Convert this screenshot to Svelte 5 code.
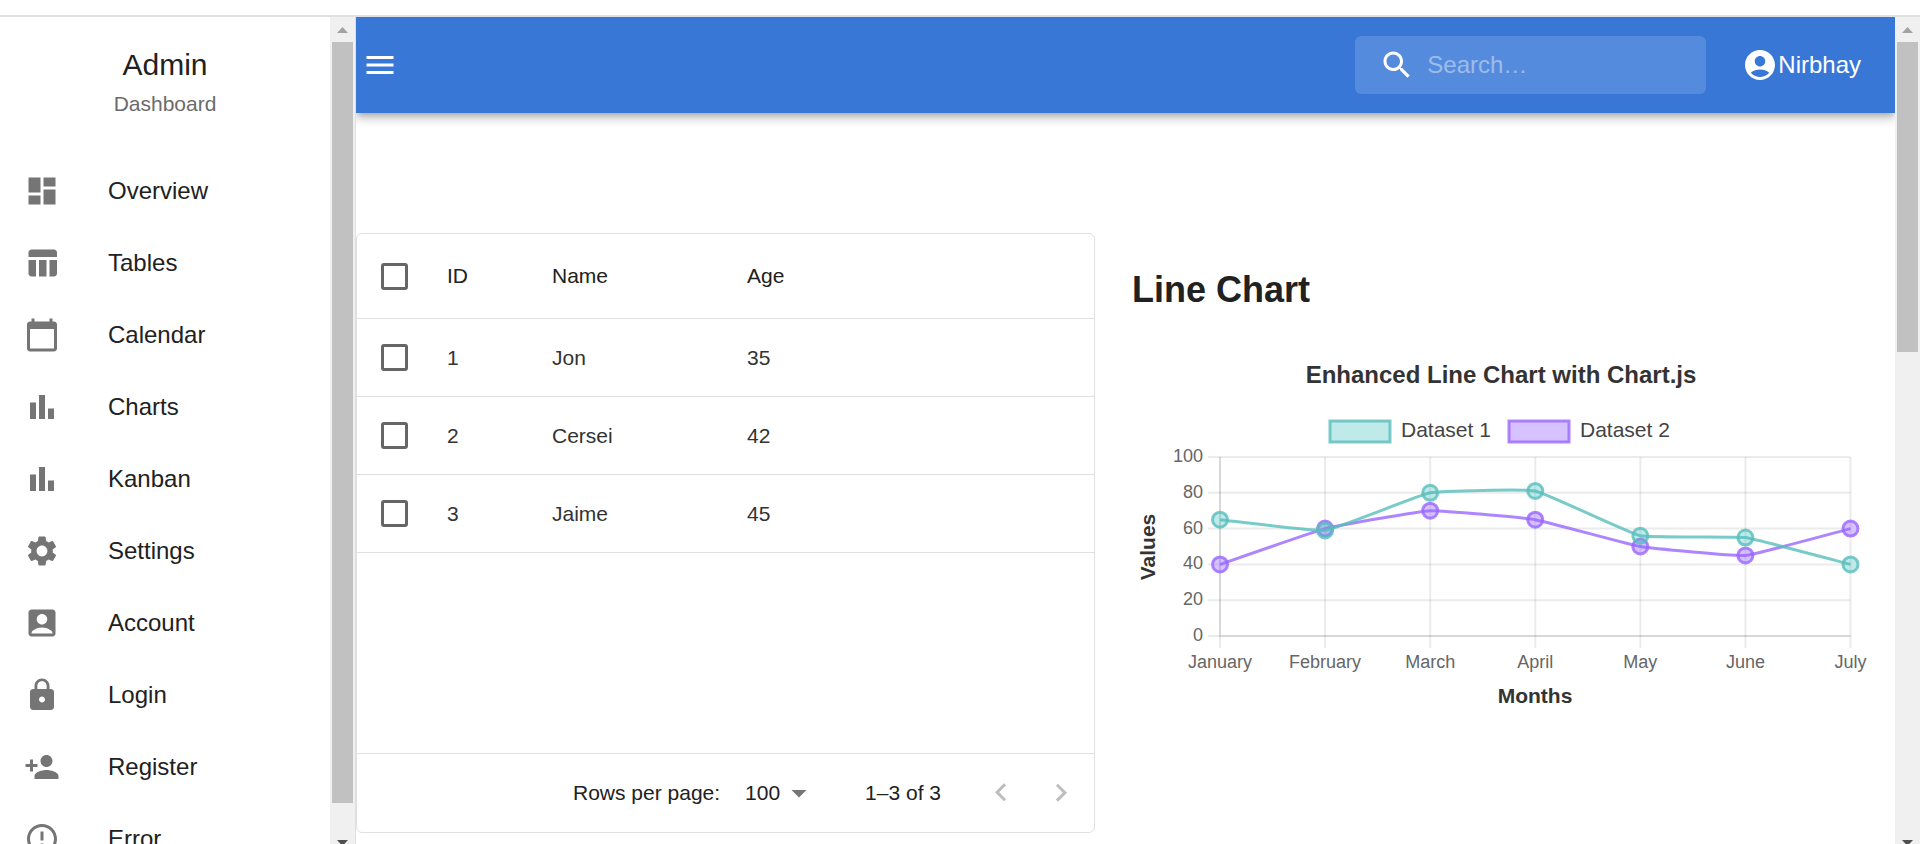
<script>
  const navItems = [
    { label: 'Overview', path: 'M3 13h8V3H3v10zm0 8h8v-6H3v6zm10 0h8V11h-8v10zm0-18v6h8V3h-8z' },
    { label: 'Tables', path: 'M10 10.02h5V21h-5zM17 21h3c1.1 0 2-.9 2-2v-9h-5v11zm3-18H5c-1.1 0-2 .9-2 2v3h19V5c0-1.1-.9-2-2-2zM3 19c0 1.1.9 2 2 2h3V10H3v9z' },
    { label: 'Calendar', path: 'M20 3h-1V1h-2v2H7V1H5v2H4c-1.1 0-2 .9-2 2v16c0 1.1.9 2 2 2h16c1.1 0 2-.9 2-2V5c0-1.1-.9-2-2-2zm0 18H4V8h16v13z' },
    { label: 'Charts', path: 'M4 9h4v11H4zm12 4h4v7h-4zm-6-9h4v16h-4z' },
    { label: 'Kanban', path: 'M4 9h4v11H4zm12 4h4v7h-4zm-6-9h4v16h-4z' },
    { label: 'Settings', path: 'M19.14 12.94c.04-.3.06-.61.06-.94 0-.32-.02-.64-.07-.94l2.03-1.58c.18-.14.23-.41.12-.61l-1.92-3.32c-.12-.22-.37-.29-.59-.22l-2.39.96c-.5-.38-1.03-.7-1.62-.94l-.36-2.54c-.04-.24-.24-.41-.48-.41h-3.84c-.24 0-.43.17-.47.41l-.36 2.54c-.59.24-1.13.57-1.62.94l-2.39-.96c-.22-.08-.47 0-.59.22L2.74 8.87c-.12.21-.08.47.12.61l2.03 1.58c-.05.3-.09.63-.09.94s.02.64.07.94l-2.03 1.58c-.18.14-.23.41-.12.61l1.92 3.32c.12.22.37.29.59.22l2.39-.96c.5.38 1.03.7 1.62.94l.36 2.54c.05.24.24.41.48.41h3.84c.24 0 .44-.17.47-.41l.36-2.54c.59-.24 1.13-.56 1.62-.94l2.39.96c.22.08.47 0 .59-.22l1.92-3.32c.12-.22.07-.47-.12-.61l-2.01-1.58zM12 15.6c-1.98 0-3.6-1.62-3.6-3.6s1.62-3.6 3.6-3.6 3.6 1.62 3.6 3.6-1.62 3.6-3.6 3.6z' },
    { label: 'Account', path: 'M19 3H5c-1.1 0-2 .9-2 2v14c0 1.1.9 2 2 2h14c1.1 0 2-.9 2-2V5c0-1.1-.9-2-2-2zm-7 3c1.93 0 3.5 1.57 3.5 3.5S13.93 13 12 13s-3.5-1.57-3.5-3.5S10.07 6 12 6zm7 13H5v-.23c0-.62.28-1.2.76-1.58C7.47 15.82 9.64 15 12 15s4.53.82 6.24 2.19c.48.38.76.97.76 1.58V19z' },
    { label: 'Login', path: 'M18 8h-1V6c0-2.76-2.24-5-5-5S7 3.24 7 6v2H6c-1.1 0-2 .9-2 2v10c0 1.1.9 2 2 2h12c1.1 0 2-.9 2-2V10c0-1.1-.9-2-2-2zm-6 9c-1.1 0-2-.9-2-2s.9-2 2-2 2 .9 2 2-.9 2-2 2zm3.1-9H8.9V6c0-1.71 1.39-3.1 3.1-3.1 1.71 0 3.1 1.39 3.1 3.1v2z' },
    { label: 'Register', path: 'M15 12c2.21 0 4-1.79 4-4s-1.79-4-4-4-4 1.79-4 4 1.79 4 4 4zm-9-2V7H4v3H1v2h3v3h2v-3h3v-2H6zm9 4c-2.67 0-8 1.34-8 4v2h16v-2c0-2.66-5.33-4-8-4z' },
    { label: 'Error', path: 'M11 15h2v2h-2zm0-8h2v6h-2zm.99-5C6.47 2 2 6.48 2 12s4.47 10 9.99 10C17.52 22 22 17.52 22 12S17.52 2 11.99 2zM12 20c-4.42 0-8-3.58-8-8s3.58-8 8-8 8 3.58 8 8-3.58 8-8 8z' }
  ];

  const people = [
    { id: 1, name: 'Jon', age: 35 },
    { id: 2, name: 'Cersei', age: 42 },
    { id: 3, name: 'Jaime', age: 45 }
  ];

  const months = ['January', 'February', 'March', 'April', 'May', 'June', 'July'];
  const ticks = [0, 20, 40, 60, 80, 100];

  // Plot area inside the 739 x 375 chart
  const plot = { left: 88, right: 718.5, top: 117, bottom: 296 };
  const xAt = (i) => plot.left + (i * (plot.right - plot.left)) / (months.length - 1);
  const yAt = (v) => plot.bottom - (v * (plot.bottom - plot.top)) / 100;

  // Smooths a series with bezier control points weighted by neighbour distance
  function curve(points, tension = 0.1) {
    const controls = points.map((p, i) => {
      const prev = points[i - 1] ?? p;
      const next = points[i + 1] ?? p;
      const before = Math.hypot(p.x - prev.x, p.y - prev.y);
      const after = Math.hypot(next.x - p.x, next.y - p.y);
      const a = (tension * before) / (before + after);
      const b = (tension * after) / (before + after);
      const dx = next.x - prev.x;
      const dy = next.y - prev.y;
      return { inX: p.x - a * dx, inY: p.y - a * dy, outX: p.x + b * dx, outY: p.y + b * dy };
    });
    let d = `M${points[0].x} ${points[0].y}`;
    for (let i = 1; i < points.length; i++) {
      const c0 = controls[i - 1];
      const c1 = controls[i];
      d += ` C${c0.outX} ${c0.outY} ${c1.inX} ${c1.inY} ${points[i].x} ${points[i].y}`;
    }
    return d;
  }

  // Listed back to front
  const series = [
    { key: 'purple', values: [40, 60, 70, 65, 50, 45, 60] },
    { key: 'teal', values: [65, 59, 80, 81, 56, 55, 40] }
  ].map((s) => {
    const points = s.values.map((v, i) => ({ x: xAt(i), y: yAt(v) }));
    return { ...s, points, d: curve(points) };
  });
</script>

{#snippet icon(path)}
  <svg class="icon" viewBox="0 0 24 24" aria-hidden="true"><path d={path} /></svg>
{/snippet}

{#snippet scrollbar(kind)}
  <div class="scrollbar {kind}" aria-hidden="true">
    <svg class="arrow up" viewBox="0 0 25 25"><path d="M7 16h11l-5.500-6z" /></svg>
    <div class="thumb"></div>
    <svg class="arrow down" viewBox="0 0 25 14"><path d="M7 10h11l-5.500 6z" /></svg>
  </div>
{/snippet}

<div class="page">
  <div class="strip"></div>
  <div class="shell">
    <aside class="sidebar">
      <div class="drawer">
        <div class="brand">
          <div class="brand-name">Admin</div>
          <div class="brand-sub">Dashboard</div>
        </div>
        <nav>
          {#each navItems as item}
            <a href="#{item.label.toLowerCase()}">{@render icon(item.path)}<span>{item.label}</span></a>
          {/each}
        </nav>
      </div>
      {@render scrollbar('side')}
    </aside>

    <main>
      <header>
        <button class="menu" aria-label="Open menu">
          {@render icon('M3 18h18v-2H3v2zm0-5h18v-2H3v2zm0-7v2h18V6H3z')}
        </button>
        <label class="search">
          {@render icon('M15.5 14h-.79l-.28-.27C15.41 12.59 16 11.11 16 9.5 16 5.91 13.09 3 9.5 3S3 5.91 3 9.5 5.91 16 9.5 16c1.61 0 3.09-.59 4.23-1.57l.27.28v.79l5 4.99L20.49 19l-4.99-5zm-6 0C7.01 14 5 11.99 5 9.5S7.01 5 9.5 5 14 7.01 14 9.5 11.99 14 9.5 14z')}
          <input type="text" placeholder="Search…" aria-label="Search" />
        </label>
        <button class="user">
          {@render icon('M12 2C6.48 2 2 6.48 2 12s4.48 10 10 10 10-4.48 10-10S17.52 2 12 2zm0 4c1.93 0 3.5 1.57 3.5 3.5S13.93 13 12 13s-3.5-1.57-3.5-3.5S10.07 6 12 6zm0 14c-2.03 0-4.43-.82-6.14-2.88C7.55 15.8 9.68 15 12 15s4.45.8 6.14 2.12C16.43 19.18 14.03 20 12 20z')}
          <span>Nirbhay</span>
        </button>
      </header>

      <div class="content">
        <section class="card">
          <table>
            <colgroup><col class="c-check" /><col class="c-id" /><col class="c-name" /><col /></colgroup>
            <thead>
              <tr>
                <th class="check"><input type="checkbox" aria-label="Select all rows" /></th>
                <th>ID</th>
                <th>Name</th>
                <th>Age</th>
              </tr>
            </thead>
            <tbody>
              {#each people as person}
                <tr>
                  <td class="check"><input type="checkbox" aria-label="Select {person.name}" /></td>
                  <td>{person.id}</td>
                  <td>{person.name}</td>
                  <td>{person.age}</td>
                </tr>
              {/each}
            </tbody>
          </table>
          <footer>
            <label for="rows">Rows per page:</label>
            <div class="select">
              <select id="rows"><option>100</option></select>
              {@render icon('M7 10l5 5 5-5z')}
            </div>
            <span class="range">1–3 of 3</span>
            <button class="pager" disabled aria-label="Previous page">
              {@render icon('M15.41 16.09l-4.58-4.59 4.58-4.59L14 5.5l-6 6 6 6z')}
            </button>
            <button class="pager" disabled aria-label="Next page">
              {@render icon('M8.59 16.34l4.58-4.59-4.58-4.59L10 5.75l6 6-6 6z')}
            </button>
          </footer>
        </section>

        <section class="chart">
          <h2>Line Chart</h2>
          <svg viewBox="0 0 739 375" role="img" aria-label="Enhanced Line Chart with Chart.js">
            <text class="title" x="369" y="43">Enhanced Line Chart with Chart.js</text>

            <rect class="swatch teal" x="198" y="81" width="60" height="21" />
            <text class="legend" x="269" y="97">Dataset 1</text>
            <rect class="swatch purple" x="377" y="81" width="60" height="21" />
            <text class="legend" x="448" y="97">Dataset 2</text>

            {#each ticks as t}
              <line class="grid" x1={plot.left - 12} x2={plot.right} y1={yAt(t)} y2={yAt(t)} />
              <text class="tick end" x="71" y={yAt(t) + 5}>{t}</text>
            {/each}
            {#each months as m, i}
              <line class="grid" x1={xAt(i)} x2={xAt(i)} y1={plot.top} y2={plot.bottom + 12} />
              <text class="tick" x={xAt(i)} y="328">{m}</text>
            {/each}
            <path class="axis" d="M{plot.left} {plot.top}V{plot.bottom}H{plot.right}" />

            {#each series as s}
              <path class="line {s.key}" d={s.d} />
              {#each s.points as p}
                <circle class="point {s.key}" cx={p.x} cy={p.y} r="7.5" />
              {/each}
            {/each}

            <text class="label" x="403" y="363">Months</text>
            <text class="label" transform="translate(23 207) rotate(-90)">Values</text>
          </svg>
        </section>
      </div>
    </main>
    {@render scrollbar('window')}
  </div>
</div>

<style>
  :global(body) {
    overflow: hidden;
    background: #fff;
  }
  .page {
    display: flex;
    flex-direction: column;
    height: 100vh;
    font-family: 'Liberation Sans', Arial, sans-serif;
    color: #212121;
    overflow: hidden;
  }
  .page * {
    box-sizing: border-box;
  }
  button,
  input,
  select {
    font: inherit;
    color: inherit;
    border: 0;
    background: none;
    padding: 0;
    margin: 0;
  }
  .icon {
    display: block;
    flex: none;
    width: 36px;
    height: 36px;
    fill: currentColor;
  }
  .strip {
    flex: none;
    height: 17px;
    border-bottom: 2px solid #dfe1e0;
  }
  .shell {
    flex: 1;
    min-height: 0;
    display: flex;
  }

  .sidebar {
    flex: none;
    display: flex;
    border-right: 1px solid #e0e0e0;
    background: #fff;
    z-index: 2;
  }
  .drawer {
    width: 330px;
    overflow: hidden;
  }
  .brand {
    padding: 24px 0 36px;
    text-align: center;
  }
  .brand-name {
    font-size: 30px;
    line-height: 48px;
  }
  .brand-sub {
    font-size: 21px;
    line-height: 30px;
    color: #6b6b6b;
  }
  nav a {
    display: flex;
    align-items: center;
    gap: 48px;
    height: 72px;
    padding-left: 24px;
    font-size: 24px;
    color: #212121;
    text-decoration: none;
  }
  nav .icon {
    color: #757575;
  }

  .scrollbar {
    flex: none;
    display: flex;
    flex-direction: column;
    width: 25px;
    background: #f0f0f0;
    z-index: 2;
  }
  .thumb {
    margin: 0 2px;
    background: #c1c1c1;
  }
  .side .thumb {
    flex: 0 0 92%;
  }
  .window .thumb {
    flex: 0 0 37.500%;
  }
  .arrow {
    flex: none;
    display: block;
    width: 25px;
    height: 25px;
    fill: #a3a3a3;
  }
  .arrow.down {
    height: 14px;
    margin-top: auto;
    fill: #505050;
  }

  main {
    flex: 1;
    min-width: 0;
    overflow: hidden;
  }
  header {
    display: flex;
    align-items: center;
    height: 96px;
    padding: 0 34px 0 6px;
    background: #3877d6;
    color: #fff;
    font-size: 24px;
    box-shadow:
      0 3px 6px -2px rgba(0, 0, 0, 0.2),
      0 6px 8px rgba(0, 0, 0, 0.14),
      0 2px 15px rgba(0, 0, 0, 0.12);
  }
  .search {
    display: flex;
    align-items: center;
    gap: 12px;
    flex: 0 1 351px;
    min-width: 0;
    height: 58px;
    margin: 0 36px 0 auto;
    padding: 0 24px;
    border-radius: 6px;
    background: rgba(255, 255, 255, 0.15);
  }
  .search input {
    flex: 1;
    min-width: 0;
    outline: none;
  }
  .search input::placeholder {
    color: #fff;
    opacity: 0.42;
  }
  .user {
    display: flex;
    align-items: center;
  }

  .content {
    display: grid;
    grid-template-columns: 1fr 1fr;
    gap: 37px;
    align-items: start;
    padding: 120px 24px 0 0;
  }
  .card {
    display: flex;
    flex-direction: column;
    min-height: 600px;
    border: 1px solid #e0e0e0;
    border-radius: 6px;
    font-size: 21px;
  }
  table {
    width: 100%;
    table-layout: fixed;
    border-collapse: separate;
    border-spacing: 0;
  }
  .c-check {
    width: 75px;
  }
  .c-id {
    width: 105px;
  }
  .c-name {
    width: 195px;
  }
  th,
  td {
    height: 78px;
    padding: 0 15px;
    border-bottom: 1px solid #e0e0e0;
    text-align: left;
    font-weight: 400;
  }
  th {
    height: 85px;
  }
  td {
    color: #333;
  }
  .check {
    padding: 0 0 0 24px;
  }
  input[type='checkbox'] {
    display: block;
    appearance: none;
    width: 27px;
    height: 27px;
    border: 3px solid #666;
    border-radius: 3px;
  }
  footer {
    display: flex;
    align-items: center;
    justify-content: flex-end;
    height: 79px;
    margin-top: auto;
    padding-right: 3px;
    border-top: 1px solid #e0e0e0;
  }
  .select {
    display: grid;
    align-items: center;
    width: 72px;
    margin: 0 48px 0 25px;
  }
  .select select,
  .select .icon {
    grid-area: 1 / 1;
  }
  .select select {
    appearance: none;
    width: 100%;
    height: 34px;
    align-self: start;
  }
  .select .icon {
    justify-self: end;
    color: #757575;
    pointer-events: none;
  }
  .range {
    margin-right: 30px;
  }
  .pager {
    padding: 12px;
    color: #bdbdbd;
  }

  .chart h2 {
    margin: 30px 0 23px;
    font-size: 36px;
    line-height: 54px;
    font-weight: 700;
  }
  .chart svg {
    display: block;
    width: 100%;
    height: auto;
  }
  text {
    text-anchor: middle;
    fill: #333;
  }
  .title {
    font-size: 24px;
    font-weight: 700;
  }
  .legend {
    font-size: 21px;
    text-anchor: start;
    fill: #444;
  }
  .label {
    font-size: 21px;
    font-weight: 700;
  }
  .tick {
    font-size: 18px;
    fill: #666;
  }
  .tick.end {
    text-anchor: end;
  }
  .grid {
    stroke: rgba(0, 0, 0, 0.08);
    stroke-width: 2;
  }
  .axis {
    fill: none;
    stroke: rgba(0, 0, 0, 0.08);
    stroke-width: 2;
  }
  .teal {
    stroke: rgba(88, 190, 188, 0.8);
    fill: rgba(75, 192, 192, 0.35);
  }
  .purple {
    stroke: rgba(153, 102, 255, 0.8);
    fill: rgba(153, 102, 255, 0.4);
  }
  .swatch,
  .point,
  .line {
    stroke-width: 3;
  }
  .line {
    fill: none;
  }
</style>
